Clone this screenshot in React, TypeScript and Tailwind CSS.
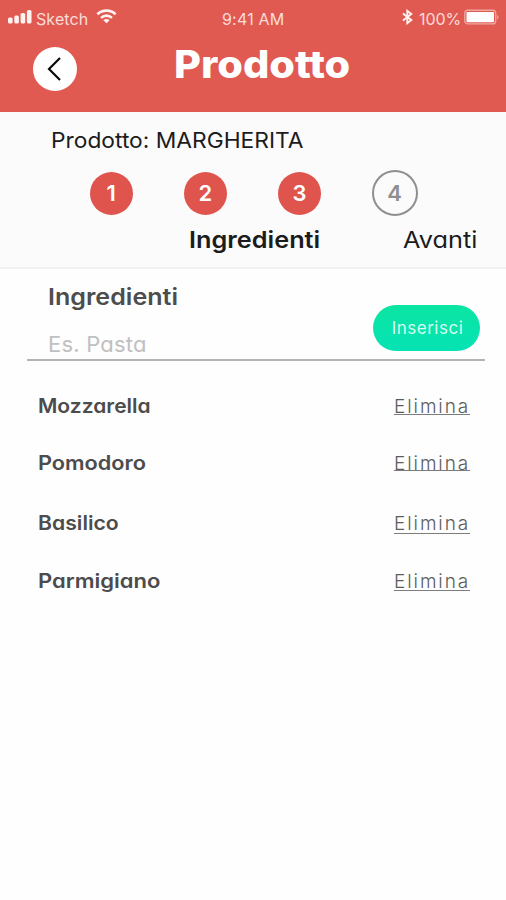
interface Ingredient {
  name: string;
  rowClass: string;
  nameClass: string;
  linkClass: string;
}

const ingredients: Ingredient[] = [
  { name: 'Mozzarella', rowClass: 'h-[57px]', nameClass: 'scale-x-[1.05]', linkClass: 'h-[19px]' },
  { name: 'Pomodoro', rowClass: 'h-[60px]', nameClass: 'scale-x-[1.085]', linkClass: 'h-[18px]' },
  { name: 'Basilico', rowClass: 'h-[58px]', nameClass: 'scale-x-[1.06]', linkClass: 'h-[21px]' },
  { name: 'Parmigiano', rowClass: 'h-[56px]', nameClass: 'scale-x-[1.1]', linkClass: 'h-[20px]' },
];

const steps = [
  { number: 1, done: true },
  { number: 2, done: true },
  { number: 3, done: true },
  { number: 4, done: false },
];

function StatusBar() {
  return (
    <div className="flex h-[37px] items-center text-[16px] leading-none text-[#fbdcd8]">
      <div className="flex w-[222px] items-center pl-2">
        <svg className="mb-[4px] h-[14px] w-[24px]" viewBox="0 0 24 14" fill="#fff3f1">
          <rect x="0" y="7.5" width="4.6" height="6" rx="1.6" />
          <rect x="6.3" y="5.5" width="4.6" height="8" rx="1.6" />
          <rect x="12.6" y="3" width="4.6" height="10.5" rx="1.6" />
          <rect x="18.9" y="0" width="4.6" height="13.5" rx="1.6" />
        </svg>
        <span className="ml-[4px] w-[54px] tracking-[0.1px]">Sketch</span>
        <svg className="mb-[4px] ml-[6px] h-[15px] w-[21px]" viewBox="0 0 21 15" fill="none" stroke="#fff3f1" strokeWidth="2.6">
          <path d="M1.4 5.2C6.4 0.4 14.6 0.4 19.6 5.2" />
          <path d="M5 8.9C8.2 5.9 12.8 5.9 16 8.9" />
          <path d="M10.5 14.2L7.4 11.2C9.2 9.6 11.8 9.6 13.6 11.2Z" fill="#fff3f1" stroke="none" />
        </svg>
      </div>
      <span className="tracking-[0.2px]">9:41 AM</span>
      <div className="ml-auto flex items-center pr-[6px]">
        <svg className="mb-[3px] h-[16px] w-[11px]" viewBox="0 0 11 16" fill="none" stroke="#fff3f1" strokeWidth="1.9">
          <path d="M1 4.5L9.3 11.1L5.3 14.2V1.8L9.3 4.9L1 11.5" />
        </svg>
        <span className="ml-[6px] w-[42px] tracking-[-0.1px]">100%</span>
        <svg className="mb-[3px] ml-[3px] h-[16px] w-[36px]" viewBox="0 0 36 16">
          <rect x="0.8" y="1.3" width="30.9" height="13.6" rx="3" fill="none" stroke="#f0a69f" strokeWidth="1.4" />
          <rect x="2.5" y="3" width="27.5" height="10.2" rx="1" fill="#fff" />
          <path d="M33.2 5.7C34.9 6.4 34.9 9.8 33.2 10.5Z" fill="#f0a69f" />
        </svg>
      </div>
    </div>
  );
}

function Header() {
  return (
    <header className="h-[112px] bg-[#e05a52]">
      <StatusBar />
      <div className="flex pl-[32.5px]">
        <button className="mt-[10px] flex h-[44px] w-[44px] items-center justify-center rounded-full bg-white pr-[2px]">
          <svg className="h-[24px] w-[14px]" viewBox="0 0 14 24" fill="none" stroke="#0a0a0a" strokeWidth="2.2">
            <path d="M13 1L2 12L13 23" />
          </svg>
        </button>
        <h1 className="ml-[97px] mt-[7px] origin-left scale-x-[1.09] text-[38px] font-extrabold leading-[40px] text-white">
          Prodotto
        </h1>
      </div>
    </header>
  );
}

function Stepper() {
  return (
    <section className="h-[157px] border-b-2 border-[#f0f0f0] bg-[#fbfbfb] text-[22px] text-[#1c1c1c]">
      <p className="ml-[51px] origin-left scale-x-[1.035] pt-[12px] leading-[32px]">Prodotto: MARGHERITA</p>
      <div className="mt-[14px] flex h-[46px] items-center gap-[48px] pl-[88px]">
        {steps.map((step) => (
          <div
            key={step.number}
            className={`flex items-center justify-center rounded-full font-semibold ${
              step.done
                ? 'mx-[1.6px] h-[43px] w-[43px] bg-[#e0544e] text-white'
                : 'ml-[1px] h-[46px] w-[46px] border-2 border-[#8f8f8f] text-[#8f8f8f]'
            }`}
          >
            {step.number}
          </div>
        ))}
      </div>
      <div className="mt-[8px] flex text-[23px] leading-[32px]">
        <span className="ml-[189px] w-[214px] origin-left scale-x-[1.1] font-semibold">Ingredienti</span>
        <span className="origin-left scale-x-[1.1]">Avanti</span>
      </div>
    </section>
  );
}

function IngredientForm() {
  return (
    <section className="ml-[27px] mr-[21px] flex h-[92px] justify-between border-b-2 border-[#b4b4b4] pl-[21px] pr-[5px]">
      <div className="leading-[32px]">
        <p className="mt-[12px] origin-left scale-x-[1.09] text-[23px] font-semibold text-[#4d4d4d]">Ingredienti</p>
        <p className="mt-[15px] text-[22px] tracking-[0.2px] text-[#c0c0c0]">Es. Pasta</p>
      </div>
      <button className="mt-[36px] h-[46px] w-[107px] rounded-full bg-linear-to-b from-[#0be5a2] to-[#06e3b4] pt-[2px] text-[17px] tracking-[0.5px] text-[#d5fff2]">
        <span className="ml-[2px]">Inserisci</span>
      </button>
    </section>
  );
}

function IngredientList() {
  return (
    <ul className="mt-[35px] pl-[38px] pr-[36px]">
      {ingredients.map((item) => (
        <li key={item.name} className={`flex items-start justify-between ${item.rowClass}`}>
          <span className={`origin-left text-[20px] font-semibold leading-[20px] text-[#4c4c4c] ${item.nameClass}`}>
            {item.name}
          </span>
          <a
            className={`w-[76px] whitespace-nowrap border-b border-[#7c7c7c] text-[19px] font-light leading-[21px] tracking-[1.9px] text-[#5c5c5c] [font-feature-settings:normal] ${item.linkClass}`}
          >
            Elimina
          </a>
        </li>
      ))}
    </ul>
  );
}

export default function App() {
  return (
    <main className="h-[900px] w-[506px] overflow-hidden bg-[#fefefe] font-['Inter',sans-serif] [font-feature-settings:'cv11']">
      <Header />
      <Stepper />
      <IngredientForm />
      <IngredientList />
    </main>
  );
}
